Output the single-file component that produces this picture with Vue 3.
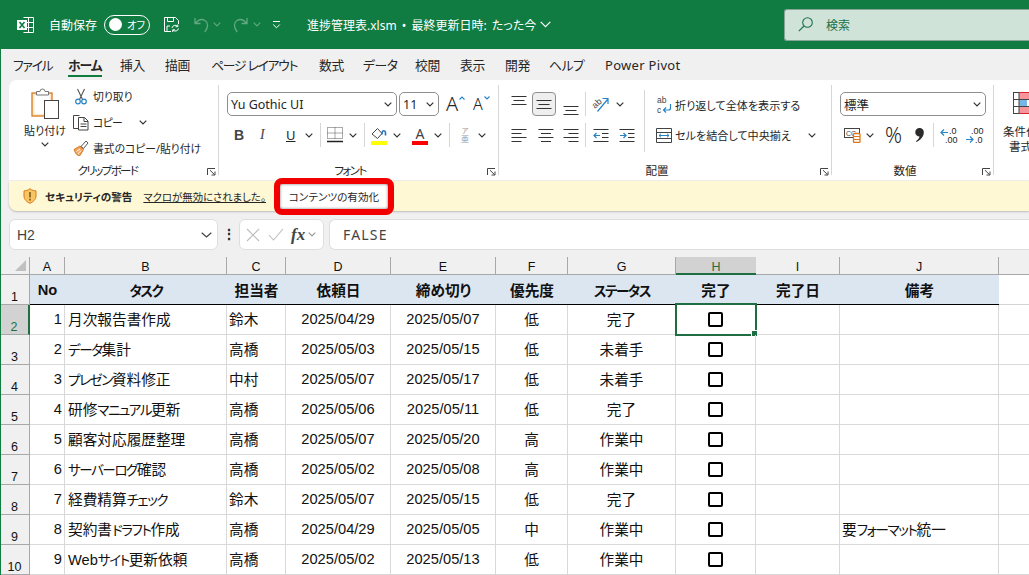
<template>
  <div class="app">
    <svg class="defs" width="0" height="0">
      <symbol id="chev" viewBox="0 0 8 5"><path d="M.7.7 4 4l3.3-3.3" fill="none" stroke="currentColor" stroke-width="1.2"/></symbol>
      <symbol id="launch" viewBox="0 0 9 8"><path d="M.5 7V.5h7.5M3 2.2 7.5 6.6M4.5 7h3.5V3.5" fill="none" stroke="#444" stroke-width="1"/></symbol>
      <symbol id="lines" viewBox="0 0 16 9"><path d="M.5.5h15M2.5 4.5h11M.5 8.5h15" fill="none" stroke="#333" stroke-width="1"/></symbol>
    </svg>

    <header class="titlebar">
      <svg class="xl" width="17" height="16" viewBox="0 0 17 16">
        <path d="M6.5.5h10v15h-10M6.5 5.5h10M6.5 10.5h10M11.5.5v15" fill="none" stroke="#fff"/>
        <rect y="3" width="10" height="10" fill="#fff"/>
        <path d="m2.5 5 5 6M7.5 5l-5 6" stroke="#107c41" stroke-width="1.6"/>
      </svg>
      <span class="autosave">自動保存</span>
      <span class="toggle"><i></i><b>オフ</b></span>
      <svg class="saveic" width="17" height="17" viewBox="0 0 17 17" fill="none" stroke="#fff">
        <path d="M8 15.5H1.5v-14h11l3 3V8M4.5 1.5v4h6v-4M4 15V10h3"/>
        <path d="M9 12a3.2 3.2 0 0 1 5.6-1.6M15.5 12.5A3.2 3.2 0 0 1 10 14M14.800 8.500v2.200h-2.200M9.700 16v-2.200h2.200"/>
      </svg>
      <svg class="undo" width="15" height="16" viewBox="0 0 15 16" fill="none" stroke="#62a883" stroke-width="1.3">
        <path d="M1 1v5.500h5.500M1.500 6.300C4.500 2.500 8 1.800 11 3.500c3.600 2.200 3.300 7-.2 11.500"/>
      </svg>
      <svg class="tchev c1" width="8" height="5"><use href="#chev"/></svg>
      <svg class="redo" width="15" height="16" viewBox="0 0 15 16" fill="none" stroke="#62a883" stroke-width="1.3">
        <path d="M14 1v5.500H8.500M13.500 6.300C10.500 2.500 7 1.800 4 3.500.4 5.700.7 10.500 4.200 15"/>
      </svg>
      <svg class="tchev c2" width="8" height="5"><use href="#chev"/></svg>
      <svg class="more" width="9" height="8" viewBox="0 0 9 8" fill="none" stroke="#fff"><path d="M1 .5h7M1.200 3.500 4.500 6.800l3.300-3.300"/></svg>
      <span class="doc">進捗管理表.xlsm • 最終更新日時: たった今</span>
      <svg class="dochev" width="11" height="7" viewBox="0 0 11 7"><path d="M.7.8 5.500 5.600 10.300.8" fill="none" stroke="#fff" stroke-width="1.2"/></svg>
      <div class="search">
        <svg width="15" height="15" viewBox="0 0 15 15" fill="none" stroke="#1e7148" stroke-width="1.1"><circle cx="9.500" cy="5.500" r="4.800"/><path d="M6 9 .8 14.200"/></svg>
        <span>検索</span>
      </div>
    </header>

    <nav class="tabs">
      <span v-for="t in tabs" :key="t.label" class="tab" :class="{ current: t.current, kana: t.kana, latin: t.latin }" :style="{ width: t.w + 'px' }">{{ t.label }}</span>
    </nav>

    <section class="ribbon">
      <div class="group g-clip">
        <div class="body clip">
          <div class="paste">
            <svg width="29" height="31" viewBox="0 0 29 31">
              <rect x="1" y="5" width="20" height="23" fill="#fdeacb" stroke="#d9791e" stroke-width="1.300"/>
              <rect x="3.500" y="7" width="15" height="19" fill="#fff"/>
              <path d="M5.500 7V3.500h3.500a2.500 2.500 0 0 1 5 0h3.500V7z" fill="#fff" stroke="#777"/>
              <rect x="13.500" y="12.500" width="14" height="18" fill="#fff" stroke="#444"/>
            </svg>
            <span>貼り付け</span>
            <svg class="chev" width="8" height="5"><use href="#chev"/></svg>
          </div>
          <div class="clipcol">
            <div class="cliprow">
              <svg width="16" height="17" viewBox="0 0 16 17" fill="none">
                <path d="M4.500 1 9.500 11.500M11.500 1 6.500 11.500" stroke="#555" stroke-width="1.100"/>
                <circle cx="5" cy="13.500" r="2.300" stroke="#2683c6" stroke-width="1.200"/><circle cx="11" cy="13.500" r="2.300" stroke="#2683c6" stroke-width="1.200"/>
              </svg>
              <span>切り取り</span>
            </div>
            <div class="cliprow">
              <svg width="16" height="17" viewBox="0 0 16 17" fill="none" stroke="#444">
                <path d="M5 14.500H.5V1.500h6"/><path d="M5.500 3.500h6l3.500 3.500v9H5.500zM11 3.500V7.500h4M7.500 10h6M7.500 12.500h6"/>
              </svg>
              <span class="copytx">コピー</span>
              <svg class="chev copychev" width="8" height="5"><use href="#chev"/></svg>
            </div>
            <div class="cliprow">
              <svg width="16" height="16" viewBox="0 0 16 16">
                <path d="M1 9.500 7 6l3.500 3.500L7 15.500c-2 .500-4-.5-6-6z" fill="#f0a35e" stroke="#d9791e"/>
                <path d="M3.500 11.500 7 9M5 14l3-3.500" stroke="#fff"/>
                <path d="m8 6.500 5-5.500 2 2-4.500 5.500z" fill="#fff" stroke="#555"/>
              </svg>
              <span>書式のコピー/貼り付け</span>
            </div>
          </div>
        </div>
        <div class="foot"><span class="glabel w-clip kanalabel">クリップボード</span><svg class="launch" width="9" height="8"><use href="#launch"/></svg></div>
      </div>
      <i class="vsep"></i>

      <div class="group g-font">
        <div class="body">
          <div class="selects">
            <div class="select fontname"><span>Yu Gothic UI</span><svg class="chev" width="8" height="5"><use href="#chev"/></svg></div>
            <div class="select fontsize"><span>11</span><svg class="chev" width="8" height="5"><use href="#chev"/></svg></div>
            <span class="grow">A<em>
              <svg width="6" height="4" viewBox="0 0 6 4"><path d="M.5 3.500 3 1l2.500 2.500" fill="none" stroke="#2683c6" stroke-width="1.100"/></svg></em></span>
            <span class="shrink">A<em>
              <svg width="6" height="4" viewBox="0 0 6 4"><path d="M.5.500 3 3 5.500.5" fill="none" stroke="#2683c6" stroke-width="1.100"/></svg></em></span>
          </div>
          <div class="fontbtns">
            <b class="fb">B</b>
            <i class="fi">I</i>
            <span class="fu">U</span>
            <svg class="chev" width="8" height="5"><use href="#chev"/></svg>
            <i class="sep"></i>
            <svg width="16" height="16" viewBox="0 0 16 16" fill="none" stroke="#555" stroke-dasharray="1 1">
              <path d="M.5.500h15v11H.5zM8 .5v11M.5 6h15"/><path d="M0 14.500h16" stroke="#222" stroke-dasharray="none" stroke-width="1.500"/>
            </svg>
            <svg class="chev" width="8" height="5"><use href="#chev"/></svg>
            <i class="sep"></i>
            <svg width="16" height="19" viewBox="0 0 16 19">
              <path d="M1 8 6.500 2.500l4.500 5-4.500 5z" fill="#fff" stroke="#444"/>
              <path d="M11 8.500V6.500c1-2.500 3-2 3.500 0v3" fill="none" stroke="#2170c0" stroke-width="1.600"/>
              <rect y="15" width="16" height="4" fill="#ffff00"/>
            </svg>
            <svg class="chev" width="8" height="5"><use href="#chev"/></svg>
            <span class="fcolor">A</span>
            <svg class="chev" width="8" height="5"><use href="#chev"/></svg>
            <i class="sep"></i>
            <span class="furi"><small>ア</small>亜</span>
            <svg class="chev" width="8" height="5"><use href="#chev"/></svg>
          </div>
        </div>
        <div class="foot"><span class="glabel w-font kanalabel">フォント</span><svg class="launch" width="9" height="8"><use href="#launch"/></svg></div>
      </div>
      <i class="vsep"></i>

      <div class="group g-align">
        <div class="body alignbody">
          <div class="aligngrid">
            <div class="arow">
              <svg class="top" width="16" height="9"><use href="#lines"/></svg>
              <span class="pressed"><svg width="16" height="9"><use href="#lines"/></svg></span>
              <svg class="bot" width="16" height="9"><use href="#lines"/></svg>
              <i class="sep"></i>
              <svg class="orient" width="17" height="16" viewBox="0 0 17 16">
                <text x="0" y="11" font-size="9" fill="#444" font-family="Liberation Sans" transform="rotate(-42 4 8)">ab</text>
                <path d="M5.500 15.500 15.500 3.500M10.500 2.500h5.500v5.500" fill="none" stroke="#2683c6" stroke-width="1.200"/>
              </svg>
              <svg class="chev" width="8" height="5"><use href="#chev"/></svg>
            </div>
            <div class="arow r2">
              <svg width="16" height="15" viewBox="0 0 16 15"><path d="M.5 1.500h15M.5 5.500h10M.5 9.500h15M.5 13.500h10" stroke="#333" fill="none"/></svg>
              <svg width="16" height="15" viewBox="0 0 16 15"><path d="M.5 1.500h15M3 5.500h10M.5 9.500h15M3 13.500h10" stroke="#333" fill="none"/></svg>
              <svg width="16" height="15" viewBox="0 0 16 15"><path d="M.5 1.500h15M5.500 5.500h10M.5 9.500h15M5.500 13.500h10" stroke="#333" fill="none"/></svg>
              <i class="sep"></i>
              <svg width="16" height="15" viewBox="0 0 16 15" fill="none"><path d="M.5 1.500h15M9 5.500h6.500M9 9.500h6.500M.5 13.500h15" stroke="#333"/><path d="M7 7.500H1M3.500 5 1 7.500 3.500 10" stroke="#2683c6" stroke-width="1.200"/></svg>
              <svg width="16" height="15" viewBox="0 0 16 15" fill="none"><path d="M.5 1.500h15M9 5.500h6.500M9 9.500h6.500M.5 13.500h15" stroke="#333"/><path d="M1 7.500h6M4.500 5 7 7.500 4.500 10" stroke="#2683c6" stroke-width="1.200"/></svg>
            </div>
          </div>
          <i class="longsep"></i>
          <div class="wrapcol">
            <div class="wraprow">
              <svg width="16" height="19" viewBox="0 0 16 19" fill="none">
                <text x="1" y="7" font-size="8.500" fill="#444" font-family="Liberation Sans">ab</text>
                <text x="1" y="17" font-size="8.500" fill="#444" font-family="Liberation Sans">c</text>
                <path d="M14.500 8v4a2 2 0 0 1-2 2H7.500M10 11.500 7.500 14l2.500 2.500" stroke="#2683c6" stroke-width="1.200"/>
              </svg>
              <span>折り返して全体を表示する</span>
            </div>
            <div class="wraprow merge">
              <svg width="16" height="15" viewBox="0 0 16 15" fill="none">
                <path d="M.5.500h15v14H.5zM.5 4.500h15M.5 10.500h15" stroke="#444"/>
                <path d="M3 7.500h10M5 5.700 3 7.500l2 1.800M11 5.700l2 1.800-2 1.800" stroke="#2683c6"/>
              </svg>
              <span>セルを結合して中央揃え</span>
              <svg class="chev mergechev" width="8" height="5"><use href="#chev"/></svg>
            </div>
          </div>
        </div>
        <div class="foot"><span class="glabel w-align">配置</span><svg class="launch" width="9" height="8"><use href="#launch"/></svg></div>
      </div>
      <i class="vsep"></i>

      <div class="group g-num">
        <div class="body">
          <div class="select numfmt"><span>標準</span><svg class="chev" width="8" height="5"><use href="#chev"/></svg></div>
          <div class="numbtns">
            <svg width="17" height="16" viewBox="0 0 17 16">
              <rect x=".5" y="1.500" width="15" height="9" fill="#fff" stroke="#444"/>
              <text x="2" y="9" font-size="7" fill="#444" font-family="Liberation Sans">CC</text>
              <rect x="9.500" y="6.500" width="6.500" height="9" rx="1" fill="#fff" stroke="#e0761a" stroke-width="1.300"/>
              <path d="M9.500 9.500h6.500M9.500 12.500h6.500" stroke="#e0761a"/>
            </svg>
            <svg class="chev" width="8" height="5"><use href="#chev"/></svg>
            <span class="pct">%</span>
            <svg width="9" height="14" viewBox="0 0 9 14"><path d="M4.500 0a4.200 4.200 0 0 1 4.300 4.500C8.800 8.500 5.500 12 1.500 14l-.5-.8c2-1.400 3.300-3 3.500-4.700A4.200 4.200 0 0 1 4.500 0z" fill="#2b2b2b"/></svg>
            <i class="sep"></i>
            <span class="dec">
              <svg width="8" height="9" viewBox="0 0 8 9" fill="none" stroke="#2683c6" stroke-width="1.200"><path d="M8 4.500H1M4 1.500l-3 3 3 3"/></svg>
              <em class="d1">.0</em><em class="d2">.00</em>
            </span>
            <span class="dec">
              <svg class="dec2" width="8" height="9" viewBox="0 0 8 9" fill="none" stroke="#2683c6" stroke-width="1.200"><path d="M0 4.500h7M4 1.500l3 3-3 3"/></svg>
              <em class="d3">.00</em><em class="d4">.0</em>
            </span>
          </div>
        </div>
        <div class="foot"><span class="glabel w-num">数値</span><svg class="launch" width="9" height="8"><use href="#launch"/></svg></div>
      </div>
      <i class="vsep"></i>

      <div class="group g-style">
        <svg class="condic" width="24" height="22" viewBox="0 0 24 22">
          <rect x=".5" y=".5" width="23" height="21" fill="#fff" stroke="#444"/>
          <rect x="6" y="1" width="17" height="6" fill="#f8949b"/>
          <rect x="6" y="7.500" width="8" height="7" fill="#78b6e8"/>
          <rect x="6" y="15" width="17" height="6" fill="#f8949b"/>
          <path d="M6 1v20M.5 7.500h23M.5 14.500h23" stroke="#444" fill="none"/>
          <path d="M6 .5h18v21H6" stroke="#d8262c" fill="none"/>
        </svg>
        <span class="condtx">条件付き<br><span class="condsub">書式</span></span>
      </div>
    </section>

    <section class="secbar">
      <svg width="14" height="16" viewBox="0 0 14 16">
        <path d="M7 .7c2 1.500 3.800 2 6 2.200v5.100c0 3.400-2.800 5.900-6 7.300C3.800 14 1 11.400 1 8V2.900C3.200 2.700 5 2.200 7 .7z" fill="#f7c561" stroke="#d9791e"/>
        <path d="M7 4v5.500M7 10.800v1.700" stroke="#6b4a12" stroke-width="1.400"/>
      </svg>
      <b class="sectitle">セキュリティの警告</b>
      <span class="seclink">マクロが無効にされました。</span>
      <button class="enable"><span>コンテンツの有効化</span></button>
    </section>

    <section class="fbar">
      <div class="namebox"><span>H2</span><svg width="11" height="6" viewBox="0 0 11 6"><path d="M.7.7 5.500 5l4.800-4.300" fill="none" stroke="#444" stroke-width="1.200"/></svg></div>
      <span class="dots">⋮</span>
      <div class="fxbox">
        <svg width="14" height="14" viewBox="0 0 14 14"><path d="m1 1 12 12M13 1 1 13" stroke="#bdbdbd" stroke-width="1.100"/></svg>
        <svg width="16" height="13" viewBox="0 0 16 13"><path d="m1 7 4.500 5L15 1" fill="none" stroke="#bdbdbd" stroke-width="1.100"/></svg>
        <i class="fx">fx</i>
        <svg width="8" height="5" class="fxchev"><use href="#chev"/></svg>
      </div>
      <div class="finput">FALSE</div>
    </section>

    <section class="sheet">
      <div class="corner"><svg width="11" height="11" viewBox="0 0 11 11"><path d="M11 0v11H0z" fill="#c0c0c0"/></svg></div>
      <div v-for="c in columns" :key="c" class="colhead" :class="{ sel: c === 'H' }">{{ c }}</div>
      <div class="colfill"></div>

      <div class="rowhead">1</div>
      <div v-for="h in headers" :key="h" class="hcell"><span><span v-for="(p, k) in parts(h)" :key="k" :class="{ nk: p.kana }">{{ p.text }}</span></span></div>
      <div class="hfill"></div>

      <template v-for="(r, i) in rows" :key="r.no">
        <div class="rowhead" :class="{ sel: i === 0 }">{{ i + 2 }}</div>
        <div class="cell right">{{ r.no }}</div>
        <div class="cell task"><span><span v-for="(p, k) in parts(r.task)" :key="k" :class="{ nk: p.kana }">{{ p.text }}</span></span></div>
        <div class="cell left">{{ r.who }}</div>
        <div class="cell">{{ r.from }}</div>
        <div class="cell">{{ r.due }}</div>
        <div class="cell">{{ r.pri }}</div>
        <div class="cell">{{ r.status }}</div>
        <div class="cell checkcell">
          <span class="check"></span>
          <template v-if="i === 0"><i class="cursor"></i><i class="handle"></i></template>
        </div>
        <div class="cell"></div>
        <div class="cell left"><span><span v-for="(p, k) in parts(r.note)" :key="k" :class="{ nk: p.kana }">{{ p.text }}</span></span></div>
        <div class="cell fill"></div>
      </template>
    </section>
  </div>
</template>

<script setup>
const tabs = [
  { label: 'ファイル', w: 55, kana: true },
  { label: 'ホーム', w: 52, current: true },
  { label: '挿入', w: 45 },
  { label: '描画', w: 46 },
  { label: 'ページ レイアウト', w: 108, kana: true },
  { label: '数式', w: 44 },
  { label: 'データ', w: 52 },
  { label: '校閲', w: 45 },
  { label: '表示', w: 45 },
  { label: '開発', w: 44 },
  { label: 'ヘルプ', w: 56 },
  { label: 'Power Pivot', w: 90, latin: true }
]

const columns = ['A', 'B', 'C', 'D', 'E', 'F', 'G', 'H', 'I', 'J']
const headers = ['No', 'タスク', '担当者', '依頼日', '締め切り', '優先度', 'ステータス', '完了', '完了日', '備考']

const rows = [
  { no: 1, task: '月次報告書作成', who: '鈴木', from: '2025/04/29', due: '2025/05/07', pri: '低', status: '完了' },
  { no: 2, task: 'データ集計', who: '高橋', from: '2025/05/03', due: '2025/05/15', pri: '低', status: '未着手' },
  { no: 3, task: 'プレゼン資料修正', who: '中村', from: '2025/05/07', due: '2025/05/17', pri: '低', status: '未着手' },
  { no: 4, task: '研修マニュアル更新', who: '高橋', from: '2025/05/06', due: '2025/05/11', pri: '低', status: '完了' },
  { no: 5, task: '顧客対応履歴整理', who: '高橋', from: '2025/05/07', due: '2025/05/20', pri: '高', status: '作業中' },
  { no: 6, task: 'サーバーログ確認', who: '高橋', from: '2025/05/02', due: '2025/05/08', pri: '高', status: '作業中' },
  { no: 7, task: '経費精算チェック', who: '鈴木', from: '2025/05/07', due: '2025/05/15', pri: '低', status: '完了' },
  { no: 8, task: '契約書ドラフト作成', who: '高橋', from: '2025/04/29', due: '2025/05/05', pri: '中', status: '作業中', note: '要フォーマット統一' },
  { no: 9, task: 'Webサイト更新依頼', who: '高橋', from: '2025/05/02', due: '2025/05/13', pri: '低', status: '作業中' }
]

// katakana runs sit tighter than kanji in the sheet font
const parts = text => (text || '')
  .split(/([ァ-ヶー]+)/)
  .filter(Boolean)
  .map(s => ({ text: s, kana: /^[ァ-ヶー]/.test(s) }))
</script>

<style>
html, body {
  margin: 0;
  overflow: hidden;
  background: #f0f0f0;
}
</style>

<style scoped>
.app {
  width: 1029px;
  height: 575px;
  overflow: hidden;
  background: #f0f0f0;
  font-family: "Noto Sans", "Noto Sans CJK JP", sans-serif;
  font-feature-settings: "palt";
  color: #262626;
  font-size: 12px;
  position: relative;
  border-left: 1px solid #107c41;
  box-sizing: border-box;
}
.defs { position: absolute; }
svg { display: block; flex: none; }
.chev { color: #333; }

.titlebar {
  margin-left: -1px;
  height: 49px;
  background: #107c41;
  color: #fff;
  display: flex;
  align-items: center;
}
.xl { margin-left: 17px; }
.autosave { margin-left: 15px; font-size: 12px; }
.toggle {
  margin-left: 7px;
  width: 46px;
  height: 20px;
  box-sizing: border-box;
  border: 1px solid #fff;
  border-radius: 10px;
  display: flex;
  align-items: center;
  padding-left: 4px;
}
.toggle i { width: 13px; height: 13px; border-radius: 50%; background: #fff; flex: none; }
.toggle b { font-weight: 400; margin-left: 5px; font-size: 10.500px; white-space: nowrap; letter-spacing: -.5px; }
.saveic { margin-left: 13px; }
.undo { margin-left: 14px; }
.tchev { color: #62a883; }
.c1 { margin-left: 4px; }
.redo { margin-left: 12px; }
.c2 { margin-left: 5px; }
.more { margin-left: 11px; }
.doc { margin-left: 26px; font-size: 12px; word-spacing: 2px; white-space: nowrap; }
.dochev { margin-left: 4px; }
.search {
  margin-left: auto;
  width: 245px;
  height: 32px;
  box-sizing: border-box;
  background: #cfe3d8;
  border: 1px solid #87a596;
  border-right: 0;
  border-radius: 3px 0 0 3px;
  display: flex;
  align-items: center;
  padding-left: 13px;
  color: #1e7148;
}
.search span { margin-left: 13px; font-size: 12px; }

.tabs {
  height: 31px;
  display: flex;
  align-items: center;
  padding-left: 12px;
}
.tab { font-size: 12.800px; white-space: nowrap; position: relative; line-height: 31px; padding-top: 1px; box-sizing: border-box; letter-spacing: -.4px; }
.tab.kana { letter-spacing: -1.200px; }
.tab.latin { letter-spacing: .3px; font-size: 13px; }
.tab.current { font-weight: 700; letter-spacing: -1px; }
.tab.current::after {
  content: "";
  position: absolute;
  left: 0;
  top: 26px;
  width: 34px;
  height: 2px;
  background: #107c41;
}

.ribbon {
  margin-left: 8px;
  height: 100px;
  background: #fff;
  border-radius: 8px 0 0 0;
  display: flex;
  overflow: hidden;
}
.vsep { width: 1px; height: 90px; margin-top: 5px; background: #d6d6d6; flex: none; }
.group { display: flex; flex-direction: column; flex: none; box-sizing: border-box; }
.body { height: 83px; }
.foot { height: 16px; display: flex; align-items: center; font-size: 11.500px; }
.glabel { text-align: center; line-height: 12px; }
.kanalabel { letter-spacing: -1.600px; }
.launch { margin-left: auto; margin-right: 2px; margin-top: 1px; }
.sep { width: 1px; height: 24px; background: #d6d6d6; display: block; }

.g-clip { width: 209px; }
.w-clip { width: 197px; }
.clip { display: flex; padding: 3px 0 0 11px; box-sizing: border-box; }
.paste { width: 50px; display: flex; flex-direction: column; align-items: center; padding-top: 5px; }
.paste span { margin-top: 4px; font-size: 11px; line-height: 16px; white-space: nowrap; }
.paste .chev { margin-top: 3px; }
.clipcol { margin-left: 3px; display: flex; flex-direction: column; }
.cliprow { height: 26px; display: flex; align-items: center; font-size: 10.800px; white-space: nowrap; }
.cliprow span { margin-left: 4px; }
.cliprow .copytx { letter-spacing: -.6px; }
.copychev { margin-left: 17px; }

.g-font { width: 279px; }
.w-font { width: 262px; }
.selects { display: flex; padding: 12px 0 0 8px; align-items: flex-start; }
.select {
  box-sizing: border-box;
  height: 24px;
  border: 1px solid #8f8f8f;
  border-radius: 5px;
  display: flex;
  align-items: center;
  justify-content: space-between;
  padding: 0 4px 0 3px;
  font-size: 12.500px;
  background: #fff;
}
.fontname { width: 170px; }
.fontsize { width: 40px; margin-left: 2px; }
.grow, .shrink { display: flex; align-items: flex-start; line-height: 24px; font-weight: 300; }
.grow { font-size: 20px; margin-left: 7px; width: 27px; }
.shrink { font-size: 16px; }
.grow em, .shrink em { margin-top: 4px; margin-left: 1px; }
.fontbtns {
  margin-top: 7px;
  padding-left: 15px;
  display: grid;
  grid-template-columns: 26px 26px 19px 15px 7px 22px 15px 7px 22px 19px 22px 15px 11px 18px auto;
  align-items: center;
  height: 24px;
}
.fb { font-size: 14px; line-height: 1; font-family: "Liberation Sans", sans-serif; color: #444; }
.fi { font-size: 14px; line-height: 1; font-family: "Liberation Serif", serif; color: #444; }
.fu { font-size: 13px; text-decoration: underline; line-height: 1; }
.fcolor {
  width: 16px;
  text-align: center;
  font-size: 14px;
  line-height: 15px;
  border-bottom: 4px solid #ff0000;
  color: #444;
}
.furi { display: flex; flex-direction: column; align-items: center; color: #999; width: 10px; font-size: 8px; line-height: 9px; }
.furi small { font-size: 7px; line-height: 7px; }

.g-align { width: 332px; }
.w-align { width: 316px; }
.alignbody { display: flex; padding-left: 12px; box-sizing: border-box; }
.aligngrid { width: 133px; padding-top: 12px; }
.arow {
  display: grid;
  grid-template-columns: 22px 30px 22px 7px 24px auto;
  align-items: center;
  height: 24px;
}
.arow .top { align-self: start; margin-top: 4px; }
.arow .bot { align-self: end; margin-bottom: 1px; }
.orient { overflow: visible; }
.pressed {
  width: 24px;
  height: 24px;
  box-sizing: border-box;
  border: 1px solid #8f8f8f;
  border-radius: 4px;
  background: #efefef;
  display: flex;
  align-items: center;
  justify-content: center;
  margin-left: -1px;
}
.r2 { margin-top: 7px; grid-template-columns: 27px 25px 22px 8px 26px auto; }
.longsep { width: 1px; height: 62px; margin-top: 10px; background: #d6d6d6; }
.wrapcol { margin-left: 11px; padding-top: 15px; }
.wraprow { display: flex; align-items: center; height: 20px; font-size: 11.100px; white-space: nowrap; }
.wraprow span { margin-left: 3px; }
.merge { margin-top: 10px; }
.mergechev { margin-left: 17px; }

.g-num { width: 161px; }
.w-num { width: 146px; }
.numfmt { width: 146px; margin: 12px 0 0 8px; }
.numbtns {
  margin-top: 7px;
  padding-left: 12px;
  height: 24px;
  display: grid;
  grid-template-columns: 22px 19px 30px 18px 7px 26px auto;
  align-items: center;
}
.pct { font-size: 21px; font-weight: 300; line-height: 1; }
.dec { position: relative; display: block; width: 18px; height: 17px; }
.dec svg { position: absolute; left: 0; top: 1px; }
.dec .dec2 { top: 8px; }
.dec em { position: absolute; font-style: normal; font-size: 9px; line-height: 9px; font-family: "Liberation Sans", sans-serif; }
.d1 { left: 9px; top: 0; }
.d2 { left: 5px; top: 9px; }
.d3 { left: 5px; top: 0; }
.d4 { left: 9px; top: 9px; }

.g-style { width: 60px; padding: 12px 0 0 9px; }
.condic { margin-left: 10px; }
.condtx { font-size: 11.500px; line-height: 15px; margin-top: 10px; white-space: nowrap; }
.condsub { margin-left: 6px; }

.secbar {
  margin-left: 8px;
  margin-top: 1px;
  height: 30px;
  background: #fff8d4;
  border-radius: 0 0 0 8px;
  display: flex;
  align-items: center;
  padding-left: 14px;
  font-size: 10.600px;
  box-shadow: 0 1px 2px #bbb;
}
.sectitle { margin-left: 8px; font-weight: 700; white-space: nowrap; }
.seclink { margin-left: 11px; text-decoration: underline; white-space: nowrap; font-size: 10.400px; }
.enable {
  margin-left: 8px;
  width: 120px;
  height: 37px;
  box-sizing: border-box;
  border: 6px solid #f20000;
  border-radius: 8px;
  background: #fff;
  padding: 0;
  font: inherit;
  color: inherit;
  box-shadow: inset 0 0 3px #777;
  white-space: nowrap;
  flex: none;
}

.fbar {
  height: 31px;
  margin-top: 8px;
  display: flex;
  align-items: stretch;
  margin-left: 8px;
}
.namebox, .fxbox, .finput {
  background: #fff;
  box-sizing: border-box;
  border: 1px solid #dedede;
  border-radius: 6px;
  display: flex;
  align-items: center;
}
.namebox {
  width: 209px;
  padding: 0 5px 0 7px;
  justify-content: space-between;
  font-size: 14px;
  font-family: "Liberation Sans", sans-serif;
  color: #444;
}
.dots { width: 21px; text-align: center; line-height: 29px; font-size: 14px; font-weight: 700; }
.fxbox { width: 85px; padding-left: 6px; }
.fxbox svg + svg { margin-left: 8px; }
.fx {
  margin-left: 7px;
  font-family: "Liberation Serif", serif;
  font-weight: 700;
  font-size: 17px;
  color: #444;
}
.fxbox .fxchev { margin-left: 3px; color: #999; }
.finput {
  flex: 1;
  margin-left: 5px;
  padding-left: 13px;
  border-right: 0;
  border-radius: 6px 0 0 6px;
  font-size: 14px;
  letter-spacing: 1.200px;
  color: #444;
}

.sheet {
  margin-left: -1px;
  margin-top: 7px;
  display: grid;
  grid-template-columns: 30px 35px 162px 59px 105px 105px 72px 108px 80px 84px 159px 30px;
  grid-template-rows: 18px repeat(10, 30px);
  font-family: "Liberation Sans", "Noto Sans CJK JP", sans-serif;
  font-size: 14.670px;
  color: #111;
  background: #fff;
  position: relative;
}
.nk { font-size: 13.500px; letter-spacing: -1.400px; }
.corner, .colhead, .colfill {
  background: #f0f0f0;
  border-bottom: 1px solid #a8a8a8;
  box-sizing: border-box;
}
.corner {
  border-right: 1px solid #a8a8a8;
  display: flex;
  align-items: flex-end;
  justify-content: flex-end;
  padding: 0 3px 3px 0;
}
.colhead {
  border-right: 1px solid #a8a8a8;
  text-align: center;
  font-size: 12.500px;
  line-height: 18px;
  padding-top: 1px;
}
.colhead.sel {
  background: #d2d2d2;
  color: #1e6e42;
  border-bottom: 2px solid #1e6e42;
  border-right: 0;
}
.rowhead {
  background: #f0f0f0;
  border-right: 1px solid #a8a8a8;
  border-bottom: 1px solid #a8a8a8;
  box-sizing: border-box;
  font-size: 12.500px;
  line-height: 13px;
  display: flex;
  align-items: flex-end;
  justify-content: center;
}
.rowhead.sel {
  background: #d2d2d2;
  color: #1e6e42;
  border-right: 2px solid #1e6e42;
}
.hcell {
  background: #dce6f1;
  border-bottom: 1px solid #000;
  box-sizing: border-box;
  display: flex;
  align-items: center;
  justify-content: center;
  font-weight: 700;
  white-space: nowrap;
}
.hfill { border-bottom: 1px solid #d4d4d4; box-sizing: border-box; }
.cell {
  border-right: 1px solid #d9d9d9;
  border-bottom: 1px solid #d9d9d9;
  box-sizing: border-box;
  display: flex;
  align-items: center;
  justify-content: center;
  white-space: nowrap;
  padding-bottom: 2px;
}
.cell.fill { border-right: 0; }
.right { justify-content: flex-end; padding-right: 2px; }
.left { justify-content: flex-start; padding-left: 2px; }
.task { justify-content: flex-start; padding-left: 3px; }
.checkcell { position: relative; padding-bottom: 0; }
.check {
  width: 15px;
  height: 15px;
  box-sizing: border-box;
  border: 2px solid #000;
  border-radius: 2px;
}
.cursor {
  position: absolute;
  left: -1px;
  top: -2px;
  width: 82px;
  height: 33px;
  box-sizing: border-box;
  border: 2px solid #1e6e42;
}
.handle {
  position: absolute;
  right: -3px;
  bottom: -3px;
  width: 5px;
  height: 5px;
  background: #1e6e42;
  border: 1px solid #fff;
}
</style>
